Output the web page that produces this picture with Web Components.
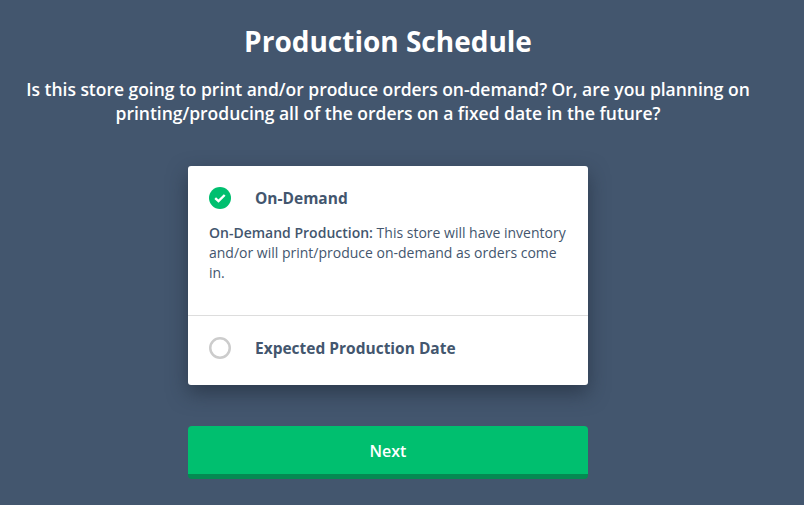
<!DOCTYPE html>
<html>
<head>
<meta charset="utf-8">
<style>
  html, body { margin: 0; height: 505px; overflow: hidden; background: #43566e; }
  body { font-family: "Open Sans", sans-serif; }
</style>
</head>
<body>
<schedule-page>
  <span slot="title">Production Schedule</span>
  <span slot="intro">Is this store going to print and/or produce orders on-demand? Or, are you planning on printing/producing all of the orders on a fixed date in the future?</span>
  <option-card>
    <option-row checked label="On-Demand"><b>On-Demand Production:</b> This store will have inventory and/or will print/produce on-demand as orders come in.</option-row>
    <option-row label="Expected Production Date"></option-row>
  </option-card>
  <next-button>Next</next-button>
</schedule-page>

<script>
class SchedulePage extends HTMLElement {
  constructor() {
    super();
    this.attachShadow({ mode: "open" });
    this.shadowRoot.innerHTML = `
      <style>
        :host { display: flex; flex-direction: column; align-items: center; width: 776px; padding-top: 23px; color: #fff; }
        h1 { margin: 0; font-size: 28px; line-height: 37px; font-weight: 700; }
        p { margin: 17px 0 41px; width: 760px; text-align: center; font-size: 17.5px; line-height: 24px; font-weight: 600; letter-spacing: -0.03px; }
      </style>
      <h1><slot name="title"></slot></h1>
      <p><slot name="intro"></slot></p>
      <slot></slot>
    `;
  }
}

class OptionCard extends HTMLElement {
  constructor() {
    super();
    this.attachShadow({ mode: "open" });
    this.shadowRoot.innerHTML = `
      <style>
        :host { display: block; width: 400px; background: #fff; border-radius: 3px; box-shadow: 0 8px 20px rgba(30, 40, 55, 0.6); }
      </style>
      <slot></slot>
    `;
  }
}

class OptionRow extends HTMLElement {
  constructor() {
    super();
    this.attachShadow({ mode: "open" });
    const checked = this.hasAttribute("checked");
    const icon = checked
      ? `<svg width="22" height="22" viewBox="0 0 22 22"><circle cx="11" cy="11" r="11" fill="#00bf6f"/><path d="M6.2 11.2l3.3 3 6.2-6.2" fill="none" stroke="#fff" stroke-width="2.4"/></svg>`
      : `<svg width="22" height="22" viewBox="0 0 22 22"><circle cx="11" cy="11" r="9.75" fill="none" stroke="#ccc" stroke-width="2.5"/></svg>`;
    this.shadowRoot.innerHTML = `
      <style>
        :host { display: block; padding: 21px 21px 26px; color: #43566e; }
        :host([checked]) { padding: 21px 18px 32px 21px; border-bottom: 1px solid #ddd; }
        .head { display: flex; align-items: center; gap: 24px; height: 22px; font-size: 15.5px; font-weight: 700; }
        svg { display: block; flex: none; }
        .body { margin-top: 14px; font-size: 14px; line-height: 20px; font-weight: 400; }
        :host(:not([checked])) .body { display: none; }
        ::slotted(b) { font-weight: 600; }
      </style>
      <div class="head">${icon}<span>${this.getAttribute("label")}</span></div>
      <div class="body"><slot></slot></div>
    `;
  }
}

class NextButton extends HTMLElement {
  constructor() {
    super();
    this.attachShadow({ mode: "open" });
    this.shadowRoot.innerHTML = `
      <style>
        :host { display: block; margin-top: 41px; width: 400px; box-sizing: border-box; height: 53px; line-height: 50px; text-align: center; background: #00bf6f; border-bottom: 5px solid #058a52; border-radius: 4px; color: #fff; font-size: 16px; font-weight: 600; }
      </style>
      <slot></slot>
    `;
  }
}

customElements.define("schedule-page", SchedulePage);
customElements.define("option-card", OptionCard);
customElements.define("option-row", OptionRow);
customElements.define("next-button", NextButton);
</script>
</body>
</html>
